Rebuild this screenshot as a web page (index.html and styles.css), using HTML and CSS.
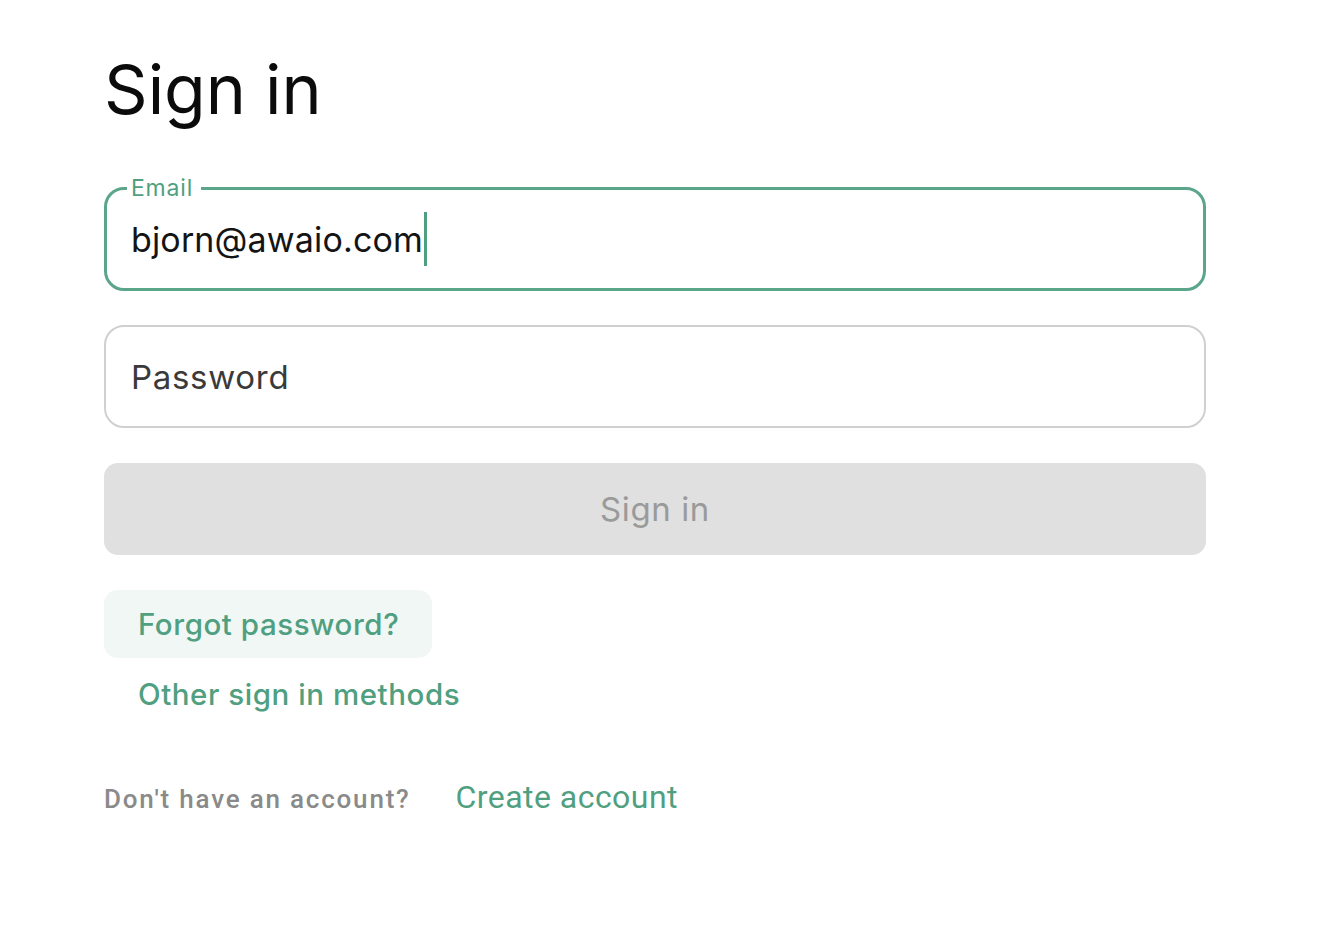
FILE: index.html
```html
<!DOCTYPE html>
<html lang="en">
<head>
<meta charset="utf-8">
<title>Sign in</title>
<link rel="stylesheet" href="styles.css">
</head>
<body>
<main class="page">
  <h1 class="title">Sign in</h1>
  <form class="form">
    <fieldset class="field field-active">
      <legend class="field-label">Email</legend>
      <div class="field-value">bjorn@awaio.com<span class="caret"></span></div>
    </fieldset>
    <div class="field field-idle">
      <span class="placeholder">Password</span>
    </div>
    <div class="submit">Sign in</div>
  </form>
  <div class="links">
    <a class="link link-hover">Forgot password?</a>
    <a class="link">Other sign in methods</a>
  </div>
  <div class="footer">
    <span class="footer-note">Don't have an account?</span>
    <a class="footer-link">Create account</a>
  </div>
</main>
</body>
</html>
```

FILE: styles.css
```css
html, body {
  margin: 0;
  padding: 0;
  background: #ffffff;
}
body {
  font-family: "Inter", "Noto Sans", sans-serif;
  color: #111;
}
.page {
  width: 1102px;
  padding: 48px 0 0 104px;
}
.title {
  margin: 0;
  font-size: 68px;
  font-weight: 400;
  line-height: 82px;
  color: #0b0b0b;
}
.form {
  margin-top: 50px;
  display: flex;
  flex-direction: column;
}
.field {
  box-sizing: border-box;
  height: 103px;
  border-radius: 20px;
  margin: 0;
}
.field-active {
  border: 3px solid #5ba68a;
  padding: 0 0 0 24px;
  min-width: 0;
  margin-top: -4px;
  height: 115px;
}
.field-label {
  margin-left: -4px;
  padding: 0 8px 0 4px;
  font-size: 23px;
  line-height: 24px;
  letter-spacing: 0.8px;
  color: #4f9f80;
}
.field-value {
  display: flex;
  align-items: center;
  height: 78px;
  margin-top: 0;
  font-size: 34px;
  letter-spacing: 0.15px;
  color: #141414;
}
.caret {
  display: inline-block;
  width: 3px;
  height: 54px;
  background: #4f9f80;
  margin-left: 1px;
}
.field-idle {
  margin-top: 34px;
  border: 2px solid #d0d0d0;
  display: flex;
  align-items: center;
  padding-left: 25px;
}
.placeholder {
  font-size: 33px;
  letter-spacing: 0.7px;
  color: #3a3a3a;
}
.submit {
  margin-top: 35px;
  height: 92px;
  border-radius: 14px;
  background: #e0e0e0;
  display: flex;
  align-items: center;
  justify-content: center;
  font-size: 33px;
  letter-spacing: 0.6px;
  color: #9a9a9a;
}
.links {
  margin-top: 35px;
  display: flex;
  flex-direction: column;
  align-items: flex-start;
}
.link {
  box-sizing: border-box;
  height: 68px;
  display: flex;
  align-items: center;
  padding: 0 0 0 34px;
  border-radius: 14px;
  font-size: 29.5px;
  font-weight: 500;
  letter-spacing: 0.55px;
  white-space: nowrap;
  color: #4f9f80;
}
.link + .link {
  height: 70px;
  padding-top: 2px;
}
.link-hover {
  width: 328px;
  background: #f0f7f4;
}
.footer {
  margin-top: 50px;
  display: flex;
  align-items: baseline;
  gap: 45px;
}
.footer-note {
  font-family: "Roboto", "Liberation Sans", sans-serif;
  font-size: 26px;
  font-weight: 500;
  letter-spacing: 1.8px;
  color: #8a8a8a;
}
.footer-link {
  font-family: "Roboto", "Liberation Sans", sans-serif;
  font-size: 32px;
  font-weight: 400;
  letter-spacing: 0.45px;
  color: #4f9f80;
}
```
